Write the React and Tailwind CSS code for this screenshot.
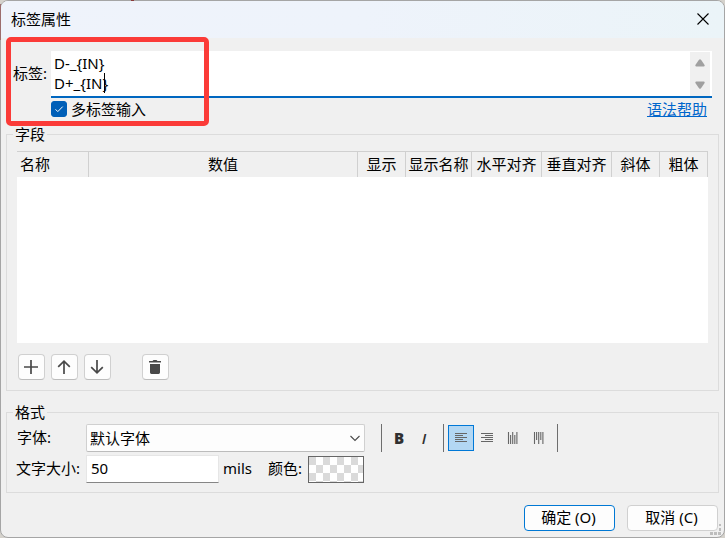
import { useState } from "react";

const COLUMNS = [
  { label: "名称", width: "w-[72px]", align: "text-left pl-[3px]" },
  { label: "数值", width: "", align: "text-center" },
  { label: "显示", width: "w-[48px]", align: "text-center" },
  { label: "显示名称", width: "w-[66px]", align: "text-center" },
  { label: "水平对齐", width: "w-[70px]", align: "text-center" },
  { label: "垂直对齐", width: "w-[70px]", align: "text-center" },
  { label: "斜体", width: "w-[48px]", align: "text-center" },
  { label: "粗体", width: "w-[48px]", align: "text-center" },
];

const ALIGNMENTS = [
  { id: "left", label: "左对齐", path: "M1 1.5h12M1 3.5h8M1 5.5h12M1 7.5h8M1 9.5h12" },
  { id: "right", label: "右对齐", path: "M1 1.5h12M5 3.5h8M1 5.5h12M5 7.5h8M1 9.5h12" },
  { id: "bottom", label: "底部对齐", path: "M2.5 0v12M4.6 3v9M6.7 0v12M8.8 3v9M10.9 0v12" },
  { id: "top", label: "顶部对齐", path: "M2.5 0v12M4.6 0v8M6.7 0v12M8.8 0v8M10.9 0v12" },
];

function Group({ title, className, children }) {
  return (
    <fieldset className={`min-w-0 border border-[#dcdcdc] pl-[10px] pr-[10px] ${className}`}>
      <legend className="-ml-1 h-5 px-[2px] leading-5">{title}</legend>
      {children}
    </fieldset>
  );
}

function ToolButton({ label, children }) {
  return (
    <button
      type="button"
      aria-label={label}
      className="flex h-[26px] w-[27px] items-center justify-center rounded border border-[#d0d0d0] border-b-[#bcbcbc] bg-[#fdfdfd] pr-px text-[#484848]"
    >
      {children}
    </button>
  );
}

function Separator() {
  return <div className="h-7 w-px bg-[#6e6e6e]" />;
}

export default function App() {
  const [labels, setLabels] = useState("D-_{IN}\nD+_{IN}");
  const [multi, setMulti] = useState(true);
  const [size, setSize] = useState("50");
  const [align, setAlign] = useState("left");

  return (
    <div className="relative min-h-screen bg-[#d5d2cc] font-['Noto_Sans','Noto_Sans_CJK_SC',sans-serif] text-[15px] leading-5 text-black">
      <div className="relative flex min-h-screen flex-col overflow-hidden rounded-lg border border-[#a5a5a5] bg-[#f0f0f0]">
        <header className="flex h-[37px] items-center justify-between bg-gradient-to-r from-[#eff3fb] via-[#eef3fb] to-[#ebf4f8] pr-[15px] pb-[2px] pl-[10px]">
          <h1>标签属性</h1>
          <button type="button" aria-label="关闭" className="text-black">
            <svg width="12" height="12" viewBox="0 0 12 12" fill="none" stroke="currentColor" strokeWidth="1.1">
              <path d="M.5.5l11 11M11.5.5l-11 11" />
            </svg>
          </button>
        </header>

        <main className="flex flex-1 flex-col px-[5px] pt-[13px] pb-[6px]">
          <div className="flex pl-[7px] pr-[7px]">
            <label htmlFor="labels" className="w-[38px] pt-3">
              标签:
            </label>
            <div className="relative flex h-[47px] flex-1 border-b-2 border-[#0067c0] bg-white">
              <textarea
                id="labels"
                value={labels}
                onChange={(e) => setLabels(e.target.value)}
                className="h-[45px] flex-1 resize-none overflow-hidden bg-transparent pt-[2px] pl-[3px] leading-5 outline-none"
              />
              {/* text cursor */}
              <span className="absolute top-[22px] left-[53px] h-5 w-px bg-black" />
              <div className="mt-px mr-[2px] flex w-5 flex-col items-center justify-between bg-[#f0f0f0] py-[7px] pr-px text-[#a0a0a0]">
                <svg width="10" height="8" viewBox="0 0 10 8" fill="currentColor">
                  <path d="M4 .8Q5-.4 6 .8L9.6 6Q10 7.5 8.6 7.5H1.4Q0 7.5.4 6Z" />
                </svg>
                <svg width="10" height="8" viewBox="0 0 10 8" fill="currentColor">
                  <path d="M4 7.2Q5 8.4 6 7.2L9.6 2Q10 .5 8.6.5H1.4Q0 .5.4 2Z" />
                </svg>
              </div>
            </div>
          </div>

          <div className="mt-px flex h-5 items-center justify-between pr-3 pl-[45px]">
            <label className="flex items-center gap-1">
              <span className="relative flex h-4 w-4">
                <input
                  type="checkbox"
                  checked={multi}
                  onChange={(e) => setMulti(e.target.checked)}
                  className="peer h-4 w-4 appearance-none rounded-[3px] border border-[#868686] bg-white checked:border-[#005fb8] checked:bg-[#005fb8]"
                />
                <svg
                  className="pointer-events-none absolute inset-0 hidden peer-checked:block"
                  width="16"
                  height="16"
                  viewBox="0 0 16 16"
                  fill="none"
                  stroke="#fff"
                >
                  <path d="M4.5 8.3l2.3 2.3 4.9-5" />
                </svg>
              </span>
              多标签输入
            </label>
            <a href="#help" className="text-[#0066cc] underline">
              语法帮助
            </a>
          </div>

          <Group title="字段" className="mt-[5px] pt-[7px] pb-[10px]">
            <div className="min-h-[192px] bg-white">
              <table className="w-full table-fixed border-separate border-spacing-0">
                <thead>
                  <tr>
                    {COLUMNS.map((c) => (
                      <th
                        key={c.label}
                        scope="col"
                        className={`h-[26px] border-t border-r border-[#d0d0d0] bg-[#f0f0f0] p-0 pb-[2px] font-normal whitespace-nowrap ${c.width} ${c.align}`}
                      >
                        {c.label}
                      </th>
                    ))}
                  </tr>
                </thead>
              </table>
            </div>
            <div className="mt-[11px] flex gap-[6px] pl-px">
              <ToolButton label="添加">
                <svg width="14" height="14" viewBox="0 0 14 14" fill="none" stroke="currentColor" strokeWidth="1.7">
                  <path d="M7 0v14M0 7h14" />
                </svg>
              </ToolButton>
              <ToolButton label="上移">
                <svg width="14" height="14" viewBox="0 0 14 14" fill="none" stroke="currentColor" strokeWidth="1.7">
                  <path d="M7 14V1.2M1.2 6.8L7 1.2l5.8 5.6" />
                </svg>
              </ToolButton>
              <ToolButton label="下移">
                <svg width="14" height="14" viewBox="0 0 14 14" fill="none" stroke="currentColor" strokeWidth="1.7">
                  <path d="M7 0v12.8M1.2 7.2L7 12.8l5.8-5.6" />
                </svg>
              </ToolButton>
              <div className="ml-[25px]">
                <ToolButton label="删除">
                  <svg width="12" height="14" viewBox="0 0 12 14" fill="currentColor">
                    <path d="M0 1h3.5l1-1h3l1 1H12v1.6H0zM1 4h10v8.6Q11 14 9.6 14H2.4Q1 14 1 12.6z" />
                  </svg>
                </ToolButton>
              </div>
            </div>
          </Group>

          <Group title="格式" className="mt-[11px] pt-[2px] pb-[9px]">
            <div className="flex h-7 items-center">
              <label htmlFor="font" className="w-[69px] pb-[2px]">
                字体:
              </label>
              <div className="relative h-7 w-[279px]">
                <select
                  id="font"
                  className="h-7 w-full appearance-none rounded-[2px] border border-[#d0d0d0] border-b-[#bcbcbc] bg-[#fdfdfd] pl-[3px] outline-none"
                >
                  <option>默认字体</option>
                </select>
                <svg
                  className="pointer-events-none absolute top-[11px] right-[5px]"
                  width="10"
                  height="7"
                  viewBox="0 0 10 7"
                  fill="none"
                  stroke="#4a4a4a"
                  strokeWidth="1.1"
                >
                  <path d="M.5 1L5 5.5 9.5 1" />
                </svg>
              </div>
              <div className="ml-4 flex items-center">
                <Separator />
                <button
                  type="button"
                  aria-label="粗体"
                  className="ml-1 h-[26px] w-[26px] pb-px font-['Open_Sans'] font-extrabold text-[#303030]"
                >
                  B
                </button>
                <button
                  type="button"
                  aria-label="斜体"
                  className="h-[26px] w-[26px] pr-[2px] pb-px font-['Open_Sans'] font-semibold text-[#303030] italic"
                >
                  I
                </button>
                <div className="ml-[5px]">
                  <Separator />
                </div>
                <div className="ml-1 flex">
                  {ALIGNMENTS.map((a) => (
                    <button
                      key={a.id}
                      type="button"
                      aria-label={a.label}
                      aria-pressed={align === a.id}
                      onClick={() => setAlign(a.id)}
                      className={`flex h-[26px] w-[26px] items-center justify-center border ${
                        align === a.id ? "border-[#0078d7] bg-[#b3d7f3]" : "border-transparent"
                      }`}
                    >
                      <svg width="14" height="12" viewBox="0 0 14 12" fill="none" stroke="#666" strokeWidth="1.1">
                        <path d={a.path} />
                      </svg>
                    </button>
                  ))}
                </div>
                <div className="ml-[5px]">
                  <Separator />
                </div>
              </div>
            </div>

            <div className="mt-[3px] flex h-7 items-center">
              <label htmlFor="size" className="-ml-px w-[70px] pb-[2px] whitespace-nowrap">
                文字大小:
              </label>
              <input
                id="size"
                value={size}
                onChange={(e) => setSize(e.target.value)}
                className="h-7 w-[133px] border border-[#e6e6e6] border-b-[#868686] bg-white pb-[2px] pl-1 outline-none"
              />
              <span className="ml-1 w-[45px] pb-[2px]">mils</span>
              <label htmlFor="color" className="w-10 pb-[2px]">
                颜色:
              </label>
              <button
                id="color"
                type="button"
                aria-label="颜色"
                className="h-[27px] w-14 border border-[#666] bg-[conic-gradient(#fff_25%,#dadada_0_50%,#fff_0_75%,#dadada_0)] bg-[size:14px_16px]"
              />
            </div>
          </Group>

          <footer className="mt-3 flex justify-end gap-3 pr-px">
            <button
              type="button"
              className="h-[26px] w-[91px] rounded border border-[#0078d4] bg-[#fdfdfd] pr-[2px] pb-[2px]"
            >
              确定 (O)
            </button>
            <button
              type="button"
              className="h-[26px] w-[91px] rounded border border-[#d0d0d0] bg-[#fdfdfd] pr-[2px] pb-[2px]"
            >
              取消 (C)
            </button>
          </footer>
        </main>

        {/* resize grip */}
        <svg className="absolute right-[2px] bottom-[2px]" width="12" height="12" viewBox="0 0 12 12" fill="#bdbdbd">
          <path d="M9 1h2v2H9zM9 5h2v3H9zM8 9h3v3H8zM4 9h3v3H4zM0 9h3v3H0z" />
        </svg>

        {/* callout around the label input */}
        <div className="pointer-events-none absolute top-[36px] left-[5px] h-[89px] w-[203px] rounded-[5px] border-[5px] border-[#fb3b38]" />
      </div>

      {/* slivers of the schematic window behind the dialog */}
      <div aria-hidden className="absolute top-1 left-0 h-9 w-px bg-[#9c6d6d]" />
      <div aria-hidden className="absolute top-0 left-[131px] h-px w-[3px] bg-[#8a3a3a]" />
    </div>
  );
}
